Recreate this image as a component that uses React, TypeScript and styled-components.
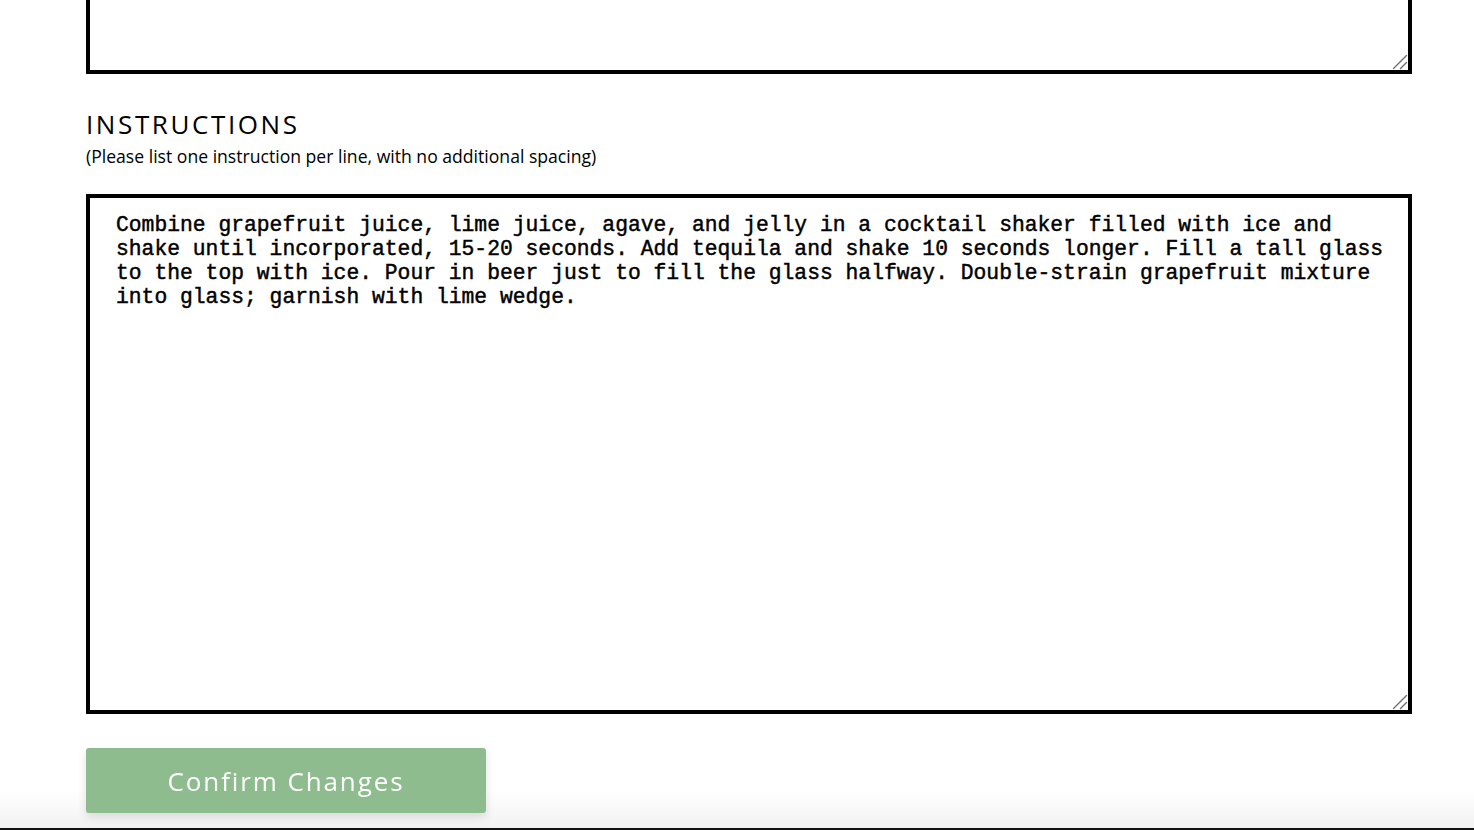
import React from "react";
import styled, { createGlobalStyle } from "styled-components";

const GlobalStyle = createGlobalStyle`
  html, body {
    margin: 0;
    padding: 0;
    background: #ffffff;
    overflow: hidden;
  }
  body {
    font-family: "Open Sans", "Liberation Sans", sans-serif;
    color: #000;
  }
`;

const Page = styled.main`
  display: flex;
  flex-direction: column;
  padding: 0 62px 0 86px;
  height: 830px;
  box-sizing: border-box;
`;

const FieldWrap = styled.div`
  position: relative;
  flex: none;
`;

const Field = styled.textarea<{ $height: number; $cutTop?: boolean }>`
  display: block;
  box-sizing: border-box;
  width: 100%;
  height: ${(p) => p.$height}px;
  border: 4px solid #000;
  border-top-width: ${(p) => (p.$cutTop ? 0 : 4)}px;
  border-radius: 0;
  padding: 15px 18px 14px 26px;
  margin: 0;
  font-family: "Liberation Mono", "Courier New", monospace;
  font-weight: 400;
  -webkit-text-stroke: 0.45px #000;
  font-size: 21.333px;
  line-height: 24px;
  color: #000;
  background: #fff;
  resize: none;
  outline: none;
  overflow: hidden;
`;

const Grip = styled.svg`
  position: absolute;
  right: 4px;
  bottom: 4px;
  width: 16px;
  height: 16px;
  pointer-events: none;
`;

const Heading = styled.h2`
  margin: 35px 0 0;
  font-family: "Open Sans", "Liberation Sans", sans-serif;
  font-weight: 400;
  font-size: 26px;
  line-height: 30px;
  letter-spacing: 2.6px;
  color: #000;
`;

const Note = styled.p`
  margin: 6px 0 0;
  font-family: "Open Sans", "Liberation Sans", sans-serif;
  font-size: 17.6px;
  line-height: 22px;
  color: #000;
`;

const Gap = styled.div<{ $size: number }>`
  height: ${(p) => p.$size}px;
  flex: none;
`;

const ConfirmButton = styled.button`
  position: relative;
  z-index: 2;
  align-self: flex-start;
  width: 400px;
  height: 65px;
  border: none;
  border-radius: 3px;
  background: #8fbc8f;
  color: #fff;
  font-family: "Open Sans", "Liberation Sans", sans-serif;
  font-size: 26px;
  letter-spacing: 1.9px;
  box-shadow: 0 4px 10px rgba(0, 0, 0, 0.12);
  cursor: pointer;
`;

const FooterShade = styled.div`
  position: fixed;
  left: 0;
  right: 0;
  bottom: 0;
  height: 40px;
  z-index: 1;
  pointer-events: none;
  background: linear-gradient(to bottom, rgba(0, 0, 0, 0) 0%, rgba(0, 0, 0, 0.05) 94%, #111 94%, #111 100%);
`;

const ResizeGrip = () => (
  <Grip viewBox="0 0 16 16" aria-hidden="true">
    <path d="M1.5 14.5 L14.5 1.5 M8.5 14.5 L14.5 8.5" stroke="#6f6f6f" strokeWidth="1.4" strokeLinecap="round" fill="none" />
  </Grip>
);

const instructions =
  "Combine grapefruit juice, lime juice, agave, and jelly in a cocktail shaker filled with ice and shake until incorporated, 15-20 seconds. Add tequila and shake 10 seconds longer. Fill a tall glass to the top with ice. Pour in beer just to fill the glass halfway. Double-strain grapefruit mixture into glass; garnish with lime wedge.";

export default function App() {
  return (
    <>
      <GlobalStyle />
      <Page>
        <FieldWrap>
          <Field $height={74} $cutTop defaultValue="" aria-label="Ingredients" />
          <ResizeGrip />
        </FieldWrap>
        <Heading>INSTRUCTIONS</Heading>
        <Note>(Please list one instruction per line, with no additional spacing)</Note>
        <Gap $size={27} />
        <FieldWrap>
          <Field $height={520} defaultValue={instructions} aria-label="Instructions" />
          <ResizeGrip />
        </FieldWrap>
        <Gap $size={34} />
        <ConfirmButton type="button">Confirm Changes</ConfirmButton>
      </Page>
      <FooterShade />
    </>
  );
}
